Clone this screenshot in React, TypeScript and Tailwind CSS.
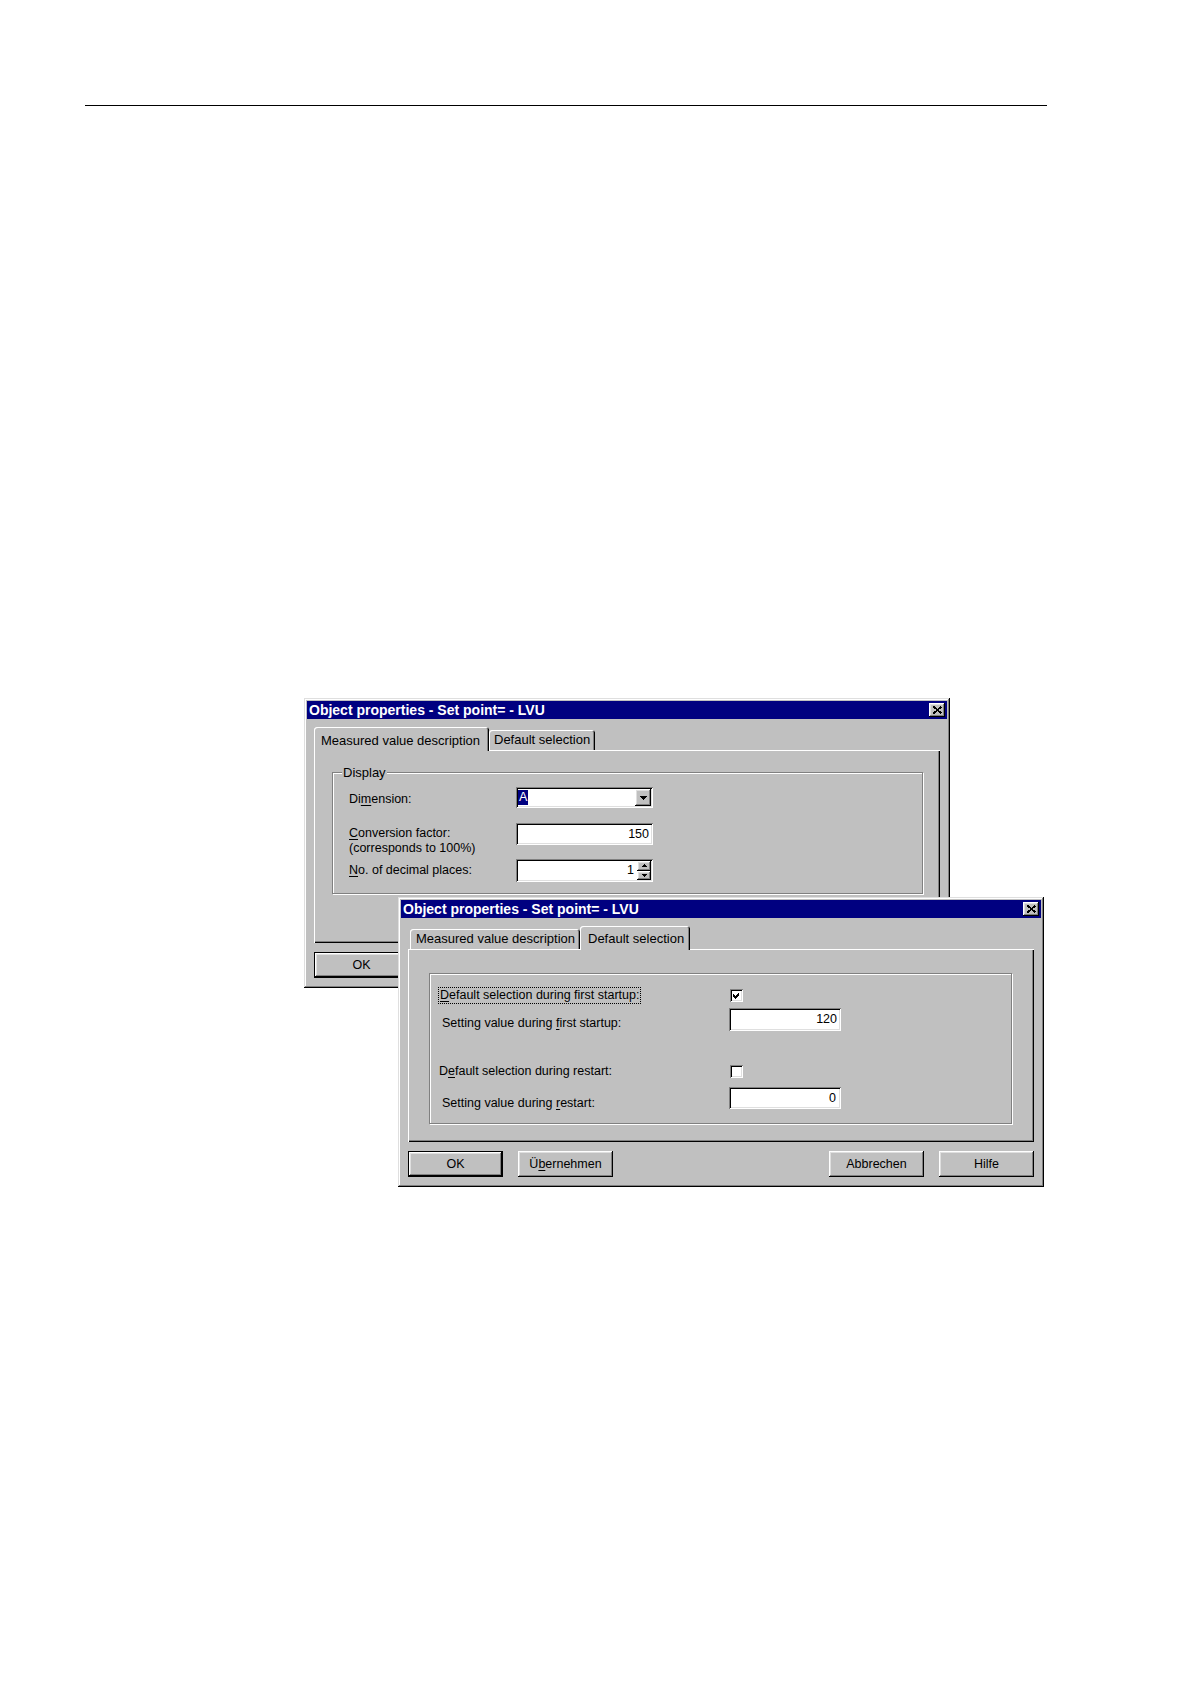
import React from "react";

const RAISED =
  "shadow-[inset_-1px_-1px_0_#000,inset_1px_1px_0_#dfdfdf,inset_-2px_-2px_0_#808080,inset_2px_2px_0_#fff]";
const BTN =
  "shadow-[inset_-1px_-1px_0_#000,inset_1px_1px_0_#fff,inset_-2px_-2px_0_#808080,inset_2px_2px_0_#dfdfdf]";
const SUNKEN =
  "shadow-[inset_1px_1px_0_#808080,inset_-1px_-1px_0_#fff,inset_2px_2px_0_#000,inset_-2px_-2px_0_#dfdfdf]";
const PANEL =
  "shadow-[inset_1px_1px_0_#fff,inset_-1px_-1px_0_#000,inset_-2px_-2px_0_#808080]";
const TAB =
  "rounded-t-[3px] shadow-[inset_1px_1px_0_#fff,inset_-1px_0_0_#000,inset_-2px_0_0_#808080]";
const GROUP =
  "relative border border-[#808080] shadow-[inset_1px_1px_0_#fff,1px_1px_0_#fff]";

function U({ children }: { children: React.ReactNode }) {
  return <span className="underline underline-offset-[2px]">{children}</span>;
}

function CloseButton() {
  return (
    <div className={`w-[16px] h-[14px] bg-[#c0c0c0] flex items-center justify-center ${BTN}`}>
      <svg width="9" height="8" viewBox="0 0 9 8" shapeRendering="crispEdges">
        <path d="M0.5 0.5 L8.5 7.5 M8.5 0.5 L0.5 7.5" stroke="#000" strokeWidth="1.8" fill="none" />
      </svg>
    </div>
  );
}

function Button({ children, isDefault }: { children: React.ReactNode; isDefault?: boolean }) {
  return (
    <div
      className={`w-[95px] h-[26px] bg-[#c0c0c0] flex items-center justify-center text-[12.5px] text-black ${
        isDefault ? "border border-black" : ""
      } ${BTN}`}
    >
      {children}
    </div>
  );
}

function Checkbox({ checked }: { checked?: boolean }) {
  return (
    <div className={`w-[13px] h-[13px] bg-white flex items-center justify-center ${SUNKEN}`}>
      {checked && (
        <svg width="7" height="7" viewBox="0 0 7 7" shapeRendering="crispEdges">
          <polygon points="0,2 2,4 6,0 6,3 2,7 0,5" fill="#000" />
        </svg>
      )}
    </div>
  );
}

function TitleBar() {
  return (
    <div className="h-[18px] bg-[#000080] flex items-center justify-between pl-[2px] pr-[2px]">
      <span className="text-white font-bold text-[14px] leading-none">
        Object properties - Set point= - LVU
      </span>
      <CloseButton />
    </div>
  );
}

function ButtonRow() {
  return (
    <div className="mt-[9px] flex justify-between">
      <div className="flex gap-[15px]">
        <Button isDefault>OK</Button>
        <Button>
          <span>
            Ü<U>b</U>ernehmen
          </span>
        </Button>
      </div>
      <div className="flex gap-[15px]">
        <Button>Abbrechen</Button>
        <Button>Hilfe</Button>
      </div>
    </div>
  );
}

function DialogOne() {
  return (
    <div
      className={`absolute left-[304px] top-[698px] w-[646px] h-[290px] bg-[#c0c0c0] p-[3px] flex flex-col ${RAISED}`}
    >
      <TitleBar />
      <div className="px-[7px] pt-[8px] flex flex-col">
        <div className="flex items-end h-[23px] relative z-10 text-[13px]">
          <div className={`w-[175px] h-[24px] -mb-[1px] bg-[#c0c0c0] flex items-start pt-[4px] pl-[7px] ${TAB}`}>
            Measured value description
          </div>
          <div className={`w-[106px] h-[20px] bg-[#c0c0c0] flex items-center pl-[5px] ${TAB}`}>
            Default selection
          </div>
        </div>
        <div className={`h-[193px] bg-[#c0c0c0] pt-[22px] pl-[18px] ${PANEL}`}>
          <div className={`w-[591px] h-[122px] ${GROUP} pt-[14px] pl-[16px]`}>
            <span className="absolute -top-[8px] left-[9px] px-[1px] bg-[#c0c0c0] leading-[15px] text-[13px]">
              Display
            </span>
            <div className="flex items-center h-[21px]">
              <div className="w-[167px] pt-[3px]">
                Di<U>m</U>ension:
              </div>
              <div className={`w-[137px] h-[21px] bg-white flex items-stretch p-[2px] ${SUNKEN}`}>
                <div className="flex-1 flex items-center">
                  <span className="bg-[#000080] text-white leading-[15px] px-[1px]">A</span>
                </div>
                <div className={`w-[16px] bg-[#c0c0c0] flex items-center justify-center ${BTN}`}>
                  <svg width="7" height="4" viewBox="0 0 7 4" shapeRendering="crispEdges">
                    <polygon points="0,0 7,0 3.5,4" fill="#000" />
                  </svg>
                </div>
              </div>
            </div>
            <div className="flex items-start h-[22px] mt-[15px]">
              <div className="w-[167px] leading-[15px] pt-[3px]">
                <div>
                  <U>C</U>onversion factor:
                </div>
                <div>(corresponds to 100%)</div>
              </div>
              <div className={`w-[137px] h-[22px] bg-white flex items-center justify-end pr-[4px] ${SUNKEN}`}>
                150
              </div>
            </div>
            <div className="flex items-center mt-[14px] h-[23px]">
              <div className="w-[167px]">
                <U>N</U>o. of decimal places:
              </div>
              <div className={`w-[137px] h-[23px] bg-white flex items-stretch p-[2px] ${SUNKEN}`}>
                <div className="flex-1 flex items-center justify-end pr-[3px]">1</div>
                <div className="w-[14px] flex flex-col">
                  <div className={`flex-1 bg-[#c0c0c0] flex items-center justify-center ${BTN}`}>
                    <svg width="5" height="3" viewBox="0 0 5 3" shapeRendering="crispEdges">
                      <polygon points="2.5,0 5,3 0,3" fill="#000" />
                    </svg>
                  </div>
                  <div className={`flex-1 bg-[#c0c0c0] flex items-center justify-center ${BTN}`}>
                    <svg width="5" height="3" viewBox="0 0 5 3" shapeRendering="crispEdges">
                      <polygon points="0,0 5,0 2.5,3" fill="#000" />
                    </svg>
                  </div>
                </div>
              </div>
            </div>
          </div>
        </div>
        <ButtonRow />
      </div>
    </div>
  );
}

function DialogTwo() {
  return (
    <div
      className={`absolute left-[398px] top-[897px] w-[646px] h-[290px] bg-[#c0c0c0] p-[3px] flex flex-col ${RAISED}`}
    >
      <TitleBar />
      <div className="px-[7px] pt-[8px] flex flex-col">
        <div className="flex items-end h-[23px] relative z-10 text-[13px]">
          <div className={`ml-[2px] w-[170px] h-[20px] bg-[#c0c0c0] flex items-center pl-[6px] ${TAB}`}>
            Measured value description
          </div>
          <div className={`w-[110px] h-[24px] -mb-[1px] bg-[#c0c0c0] flex items-start pt-[3px] pl-[8px] ${TAB}`}>
            Default selection
          </div>
        </div>
        <div className={`h-[193px] bg-[#c0c0c0] pt-[24px] pl-[21px] ${PANEL}`}>
          <div className={`w-[583px] h-[151px] ${GROUP} pt-[13px]`}>
            <div className="flex items-center h-[17px]">
              <div className="w-[299px] pl-[8px]">
                <span className="inline-flex items-center h-[17px] border border-dotted border-black px-[1px]">
                  <U>D</U>efault selection during first startup:
                </span>
              </div>
              <div className="ml-[1px]">
                <Checkbox checked />
              </div>
            </div>
            <div className="flex items-start h-[23px] mt-[4px]">
              <div className="w-[299px] pl-[12px] pt-[8px] leading-[15px]">
                Setting value during <U>f</U>irst startup:
              </div>
              <div className={`w-[112px] h-[23px] bg-white flex items-center justify-end pr-[4px] ${SUNKEN}`}>
                120
              </div>
            </div>
            <div className="flex items-center h-[17px] mt-[32px]">
              <div className="w-[299px] pl-[9px]">
                D<U>e</U>fault selection during restart:
              </div>
              <div className="ml-[1px]">
                <Checkbox />
              </div>
            </div>
            <div className="flex items-start h-[22px] mt-[7px]">
              <div className="w-[299px] pl-[12px] pt-[9px] leading-[15px]">
                Setting value during <U>r</U>estart:
              </div>
              <div className={`w-[112px] h-[22px] bg-white flex items-center justify-end pr-[5px] ${SUNKEN}`}>
                0
              </div>
            </div>
          </div>
        </div>
        <ButtonRow />
      </div>
    </div>
  );
}

export default function App() {
  return (
    <div className="relative w-[1190px] h-[1682px] bg-white text-black text-[12.5px] font-['Liberation_Sans',Arial,sans-serif] overflow-hidden">
      <div className="pt-[105px] pl-[85px]">
        <div className="w-[962px] h-px bg-black" />
      </div>
      <DialogOne />
      <DialogTwo />
    </div>
  );
}
